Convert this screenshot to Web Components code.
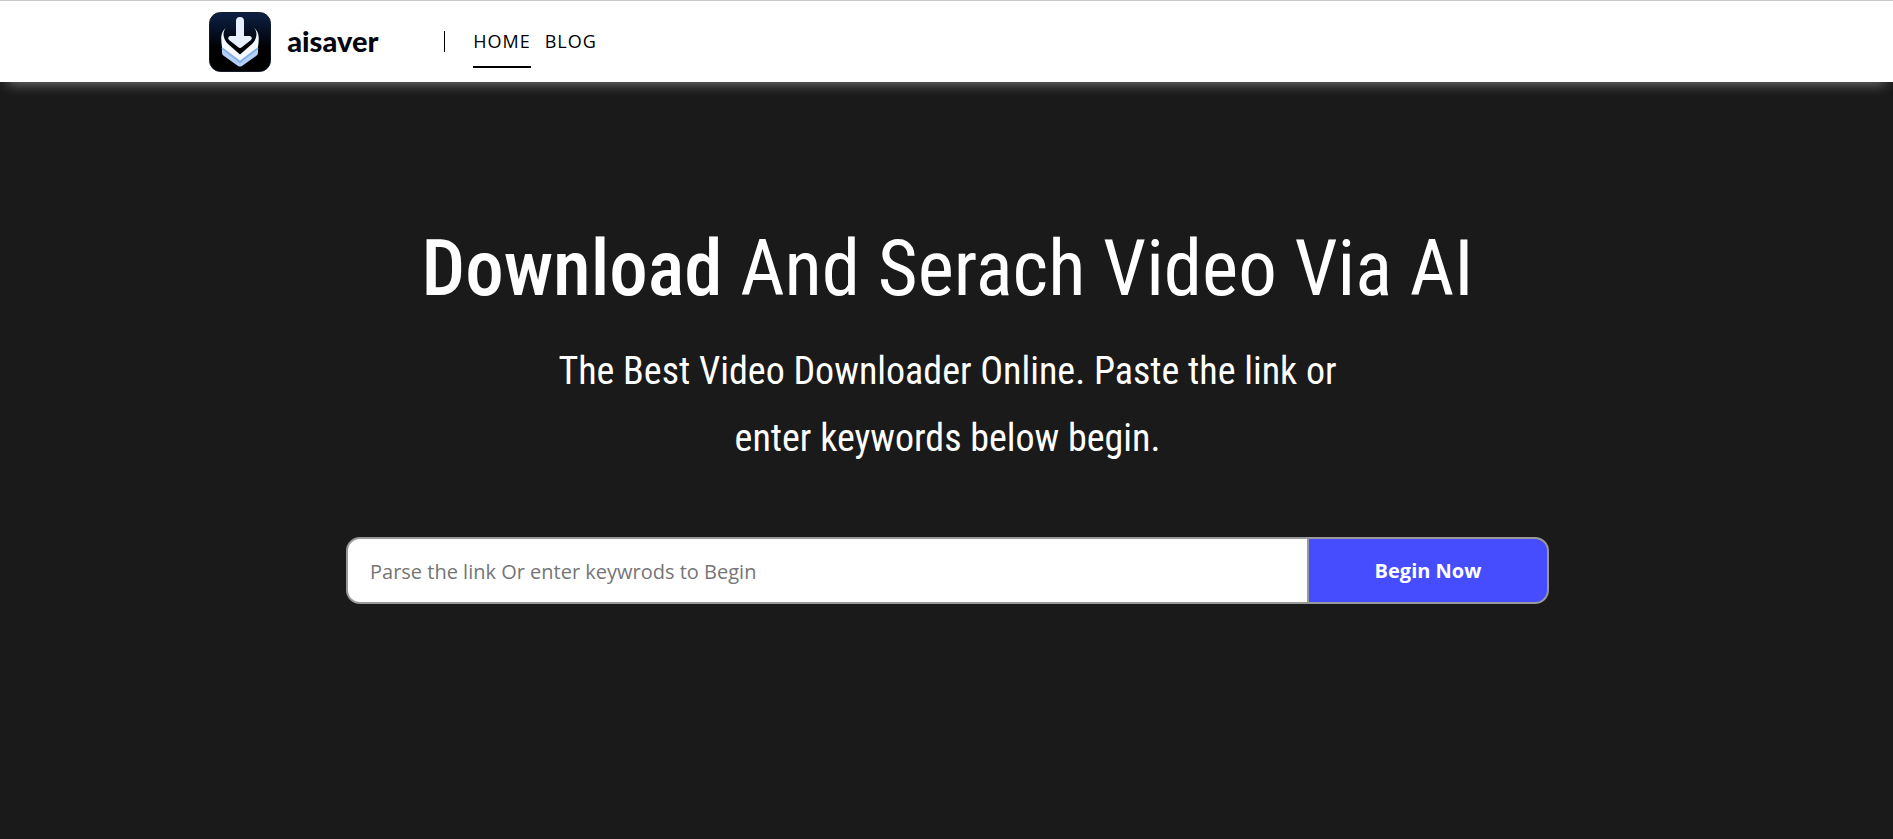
<!DOCTYPE html>
<html lang="en">
<head>
<meta charset="utf-8">
<meta name="viewport" content="width=device-width, initial-scale=1">
<title>aisaver</title>
<style>
  html, body { margin: 0; min-height: 100%; background: #1a1a1a; }
  body { font-family: "Open Sans", sans-serif; }
</style>
</head>
<body>
<saver-header>
  <saver-link href="#home" current>HOME</saver-link>
  <saver-link href="#blog">BLOG</saver-link>
</saver-header>
<saver-hero>
  <strong slot="lead">Download</strong>
  <span slot="title">And Serach Video Via AI</span>
  <span slot="text">The Best Video Downloader Online. Paste the link or enter keywords below begin.</span>
  <saver-search></saver-search>
</saver-hero>
<script>
function define(name, html, setup) {
  const template = document.createElement('template');
  template.innerHTML = html;
  customElements.define(name, class extends HTMLElement {
    connectedCallback() {
      if (this.shadowRoot) return;
      this.attachShadow({ mode: 'open' }).append(template.content.cloneNode(true));
      if (setup) setup(this, this.shadowRoot);
    }
  });
}

define('saver-logo', `
<style>
  :host { display: block; }
  a { display: flex; align-items: center; gap: 16px; color: #05060f; text-decoration: none; }
  svg { display: block; width: 62px; height: 60px; }
  span { font: 900 29px/36px Lato, sans-serif; padding-bottom: 2px; }
</style>
<a href="#home">
  <svg viewBox="0 0 62 60" aria-hidden="true">
    <defs>
      <linearGradient id="tile" x1="0" y1="0" x2="0" y2="1">
        <stop offset="0" stop-color="#0c2145"/><stop offset=".45" stop-color="#030914"/><stop offset=".6" stop-color="#000"/>
      </linearGradient>
    </defs>
    <rect x=".5" y=".5" width="61" height="59" rx="11" fill="url(#tile)" stroke="#131b29"/>
    <path d="M13 34L31 48 49 34V41Q49 43 47 44L33 54Q31 55 29 54L15 44Q13 43 13 41Z" fill="#b3cff5"/>
    <path d="M13 36L31 50 49 36" fill="none" stroke="#86aee8" stroke-width="2"/>
    <path d="M17 16C13 20 14 27 19 32L31 42.500 43 32C48 27 49 20 45 16C51 20 50 28 49 35L31 48.500 13 35C12 28 11 20 17 16Z" fill="#f4f8ff"/>
    <path d="M27 9Q27 5 31 5T35 9V24H41Q44 25 42 28L33 35Q31 37 29 35L20 28Q18 25 21 24H27Z" fill="#e7f0fe"/>
  </svg>
  <span>aisaver</span>
</a>`);

define('saver-link', `
<style>
  :host { display: block; }
  a { display: block; padding: 12px 0; border-bottom: 2px solid transparent; color: #000;
      font: 400 18px/26px "Open Sans", sans-serif; letter-spacing: 1px; text-decoration: none; }
  :host([current]) a { border-color: #000; }
</style>
<a><slot></slot></a>`, (host, root) => {
  const a = root.querySelector('a');
  a.href = host.getAttribute('href');
  if (host.hasAttribute('current')) a.setAttribute('aria-current', 'page');
});

define('saver-header', `
<style>
  :host { display: block; position: relative; background: #fff; border-top: 1px solid #c8c8c8;
          box-shadow: 0 10px 12px -8px rgba(255, 255, 255, .4); }
  header { display: flex; align-items: center; box-sizing: border-box; height: 81px; padding-left: calc(11% + 1px); }
  saver-logo { width: 235px; }
  i { width: 1px; height: 21px; margin-right: 28px; background: #000; }
  nav { display: flex; gap: 14px; }
</style>
<header>
  <saver-logo></saver-logo><i></i>
  <nav aria-label="Main"><slot></slot></nav>
</header>`);

define('saver-hero', `
<style>
  :host { display: block; padding: 131px 24px 64px 26px; color: #fff; text-align: center;
          font-family: "Roboto Condensed", Roboto, sans-serif; }
  h1 { margin: 0; font-size: 77px; line-height: 112px; font-weight: 400; }
  p { max-width: 800px; margin: 13px auto 65px; font-size: 38px; line-height: 67px; }
  ::slotted(strong) { font-weight: 500; }
</style>
<main>
  <h1><slot name="lead"></slot> <slot name="title"></slot></h1>
  <p><slot name="text"></slot></p>
  <slot></slot>
</main>`);

define('saver-search', `
<style>
  :host { display: block; max-width: 1203px; margin: 0 auto; }
  form { display: flex; box-sizing: border-box; overflow: hidden; border: 2px solid #999; border-radius: 14px; background: #999; }
  input, button { box-sizing: border-box; height: 63px; margin: 0; border: 0; border-radius: 0; font: 400 20px/28px "Open Sans", sans-serif; }
  input { flex: 1; min-width: 0; padding: 2px 22px 0; background: #fff; color: #222; }
  input::placeholder { color: #757575; opacity: 1; }
  button { width: 240px; border-left: 2px solid #999; background: #454dff; color: #fff; font-weight: 700; }
</style>
<form>
  <input type="text" aria-label="Video link or keywords" placeholder="Parse the link Or enter keywrods to Begin">
  <button type="button">Begin Now</button>
</form>`);
</script>
</body>
</html>
